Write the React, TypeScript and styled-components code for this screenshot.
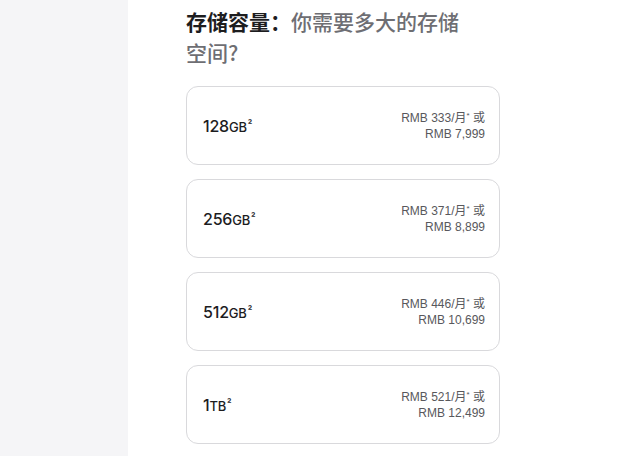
import React from "react";
import styled, { createGlobalStyle } from "styled-components";

const GlobalStyle = createGlobalStyle`
  html, body {
    margin: 0;
    padding: 0;
    background: #ffffff;
  }
  body {
    font-family: "Liberation Sans", "Noto Sans CJK SC", sans-serif;
    -webkit-font-smoothing: antialiased;
  }
`;

const Page = styled.div`
  display: flex;
  min-height: 100vh;
  overflow: hidden;
`;

const Sidebar = styled.aside`
  width: 128px;
  flex-shrink: 0;
  background: #f5f5f7;
`;

const Main = styled.main`
  flex: 1;
  padding: 6px 0 0 58px;
`;

const Heading = styled.h2`
  margin: 0 0 18px;
  max-width: 284px;
  font-family: "Noto Sans CJK SC", sans-serif;
  font-size: 21px;
  line-height: 31px;
  font-weight: 500;
  color: #6e6e73;
`;

const HeadingLead = styled.span`
  color: #1d1d1f;
  font-weight: 700;
`;

const OptionList = styled.div`
  display: flex;
  flex-direction: column;
  gap: 14px;
  width: 314px;
`;

const Option = styled.div`
  box-sizing: border-box;
  height: 79px;
  display: flex;
  align-items: center;
  justify-content: space-between;
  padding: 0 14px 0 16px;
  border: 1px solid #d9d9dc;
  border-radius: 12px;
  background: #ffffff;
`;

const Capacity = styled.span`
  font-family: "Inter", "Liberation Sans", sans-serif;
  font-size: 16px;
  font-weight: 500;
  color: #1d1d1f;
  letter-spacing: -0.2px;
`;

const Unit = styled.span`
  font-size: 13px;
`;

const Note = styled.sup`
  font-size: 10px;
  font-weight: 600;
  vertical-align: 4px;
  line-height: 0;
  margin-left: 1px;
`;

const Price = styled.div`
  text-align: right;
  font-size: 12px;
  line-height: 16px;
  color: #58585c;
`;

const Star = styled.sup`
  font-size: 8px;
  line-height: 0;
  vertical-align: 4px;
`;

type StorageOption = {
  size: string;
  unit: string;
  monthly: string;
  total: string;
};

const options: StorageOption[] = [
  { size: "128", unit: "GB", monthly: "333", total: "7,999" },
  { size: "256", unit: "GB", monthly: "371", total: "8,899" },
  { size: "512", unit: "GB", monthly: "446", total: "10,699" },
  { size: "1", unit: "TB", monthly: "521", total: "12,499" },
];

export default function App() {
  return (
    <>
      <GlobalStyle />
      <Page>
        <Sidebar />
        <Main>
          <Heading>
            <HeadingLead>存储容量：</HeadingLead>你需要多大的存储空间?
          </Heading>
          <OptionList>
            {options.map((o) => (
              <Option key={o.size + o.unit}>
                <Capacity>
                  {o.size}
                  <Unit>{o.unit}</Unit>
                  <Note>²</Note>
                </Capacity>
                <Price>
                  RMB {o.monthly}/月<Star>*</Star> 或
                  <br />
                  RMB {o.total}
                </Price>
              </Option>
            ))}
          </OptionList>
        </Main>
      </Page>
    </>
  );
}
